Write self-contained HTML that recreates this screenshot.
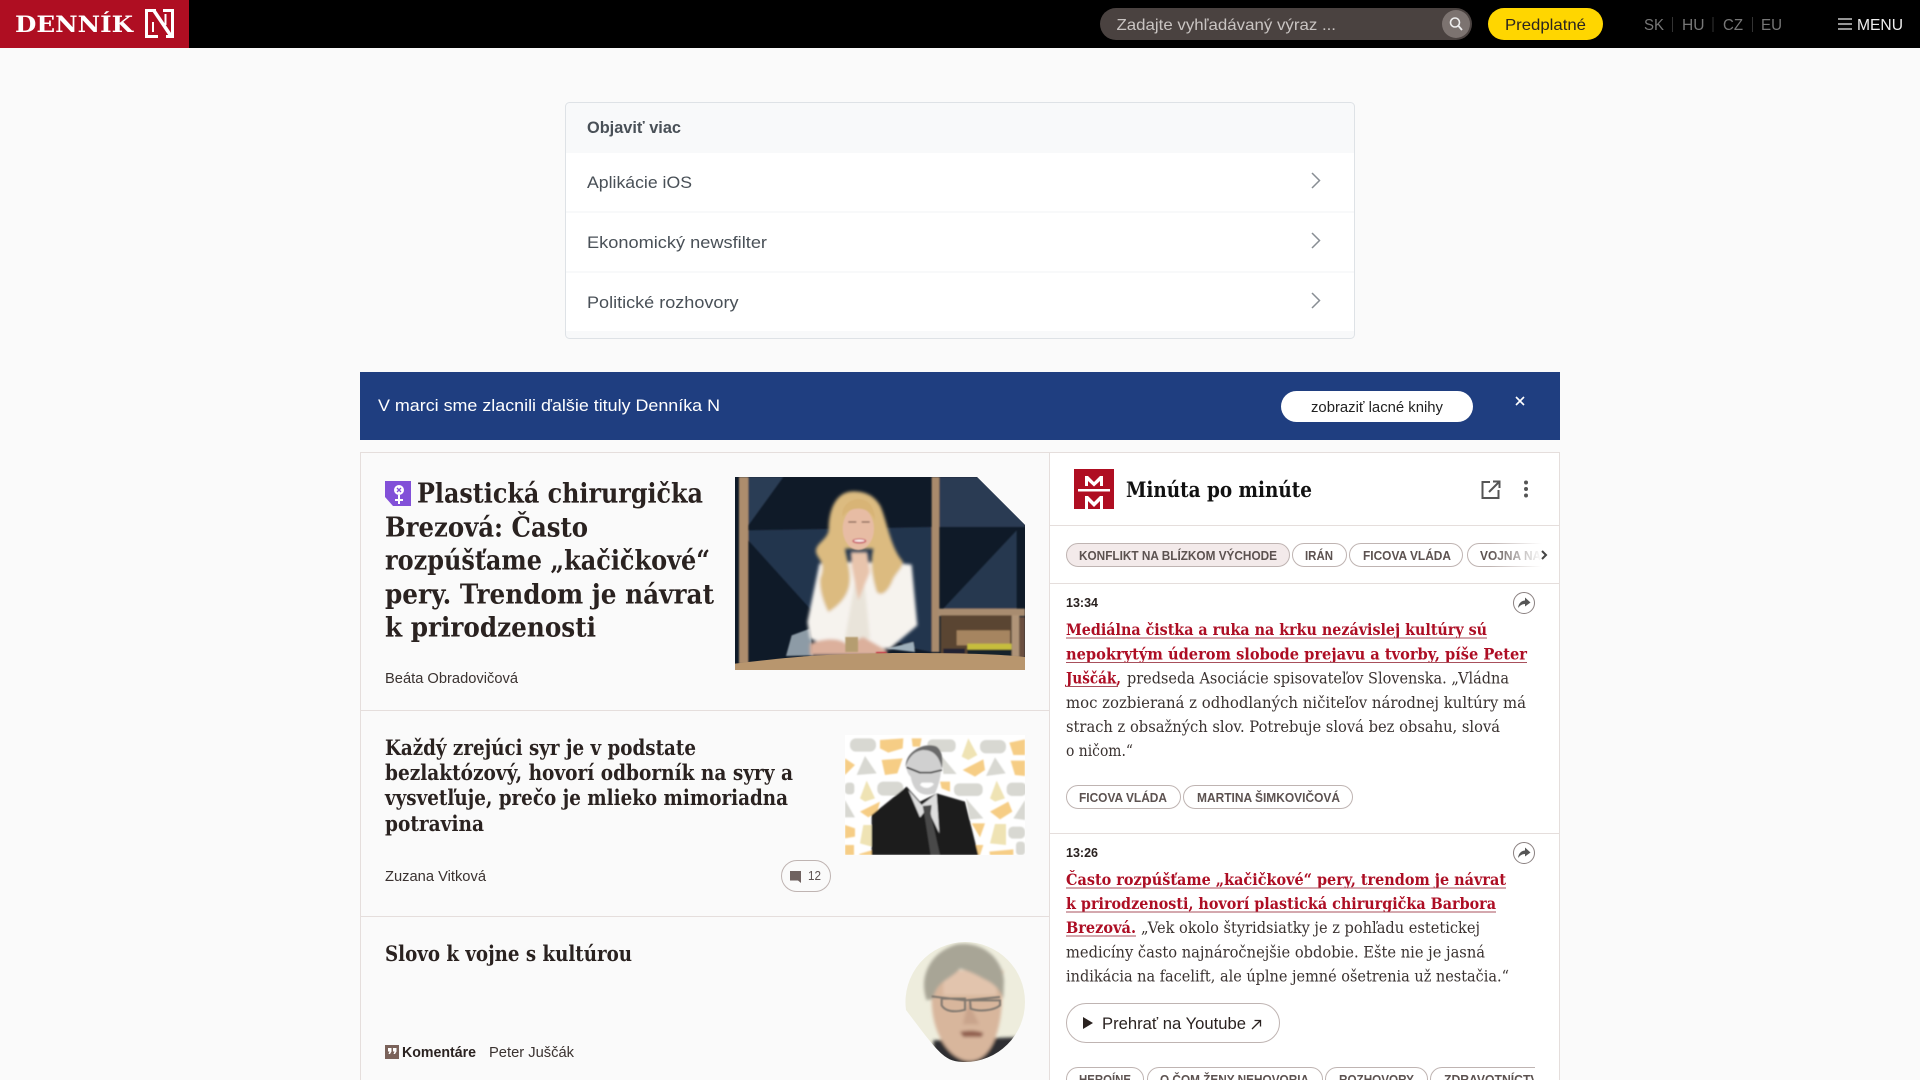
<!DOCTYPE html>
<html lang="sk"><head><meta charset="utf-8"><title>Denník N</title>
<style>
html,body{margin:0;padding:0;width:1920px;height:1080px;overflow:hidden;background:#fafafa}
svg{display:block}
text{white-space:pre}
.s{font-family:"Liberation Sans",sans-serif}
.d{font-family:"DejaVu Serif","Liberation Serif",serif}
.b{font-weight:700}
.h1{font-size:27px;fill:#2a2220;font-weight:700}
.h2{font-size:21.5px;fill:#2a2220;font-weight:700}
.r{font-size:15.5px;fill:#ad0e24;font-weight:700}
.t{font-size:15.5px;fill:#3a3230}
.tag{font-size:12.5px;font-weight:700;fill:#5c5250}
.au{font-size:14.5px;fill:#3a3230}
.lst{font-size:17px;fill:#495057}
.pill{fill:none;stroke:#bfb4b2;stroke-width:1}
.ul{stroke:#a8505c;stroke-width:1}
</style></head>
<body>
<svg xmlns="http://www.w3.org/2000/svg" width="1920" height="1080" viewBox="0 0 1920 1080">
<defs>
<filter id="bl"><feGaussianBlur stdDeviation="5"/></filter>
<filter id="bl2"><feGaussianBlur stdDeviation="2.5"/></filter>
<filter id="bl3"><feGaussianBlur stdDeviation="8"/></filter>
<clipPath id="c1"><path d="M735 477H977L1025 525V670H735Z"/></clipPath>
<clipPath id="c2"><rect x="845" y="735" width="180" height="120"/></clipPath>
<clipPath id="c3"><path d="M965 942A60 60 0 0 1 965 1062C945 1062 940 1055 906 1010A60 60 0 0 1 965 942Z"/></clipPath>
<clipPath id="c4"><rect x="1060" y="1060" width="475" height="20"/></clipPath>
<linearGradient id="fd" x1="0" x2="1"><stop offset="0" stop-color="#fff" stop-opacity="0"/><stop offset=".75" stop-color="#fff"/><stop offset="1" stop-color="#fff"/></linearGradient>
</defs>

<rect width="1920" height="1080" fill="#fafafa"/>

<!-- header -->
<rect width="1920" height="48" fill="#000"/>
<rect width="189" height="48" fill="#af0e22"/>
<text class="d b" x="15" y="32" font-size="22" fill="#fff" textLength="118" lengthAdjust="spacingAndGlyphs">DENNÍK</text>
<path d="M156 10.5H146.5V36.5H158M163 10.500H172.500V36.500H166" fill="none" stroke="#fff" stroke-width="3"/>
<path d="M153.500 10L171 36" fill="none" stroke="#fff" stroke-width="3.500"/>
<path d="M153 22V32M165.500 14V25" fill="none" stroke="#fff" stroke-width="2"/>
<rect x="1100" y="8" width="372" height="32" rx="16" fill="#4a4240"/>
<circle cx="1456" cy="24" r="14" fill="#7c7370"/>
<circle cx="1455" cy="22.5" r="4.5" fill="none" stroke="#eee" stroke-width="1.6"/><path d="M1458.5 26L1462 30" stroke="#eee" stroke-width="1.8"/>
<text class="s" x="1116.5" y="30" font-size="16" fill="#c9c4c2" textLength="219.5" lengthAdjust="spacingAndGlyphs">Zadajte vyhľadávaný výraz ...</text>
<rect x="1488" y="8" width="115" height="32" rx="16" fill="#ffd600"/>
<text class="s" x="1505" y="30" font-size="16" fill="#2a2420" textLength="81" lengthAdjust="spacingAndGlyphs">Predplatné</text>
<g class="s" font-size="16" fill="#777">
<text x="1644" y="30" textLength="20" lengthAdjust="spacingAndGlyphs">SK</text>
<text x="1682" y="30" textLength="22.5" lengthAdjust="spacingAndGlyphs">HU</text>
<text x="1723" y="30" textLength="20" lengthAdjust="spacingAndGlyphs">CZ</text>
<text x="1761" y="30" textLength="21" lengthAdjust="spacingAndGlyphs">EU</text>
</g>
<path d="M1672.5 17V32M1713 17V32M1752.5 17V32" stroke="#333"/>
<path d="M1838 19H1852M1838 24H1852M1838 29H1852" stroke="#eee" stroke-width="1.3"/>
<text class="s" x="1857" y="30" font-size="16" fill="#eee" textLength="46" lengthAdjust="spacingAndGlyphs">MENU</text>

<!-- Objavit viac -->
<rect x="565.5" y="102.5" width="789" height="236" rx="4" fill="#f8f9fa" stroke="#dee2e6"/>
<rect x="566" y="153" width="788" height="58" fill="#fff"/>
<rect x="566" y="213" width="788" height="58" fill="#fff"/>
<rect x="566" y="273" width="788" height="58" fill="#fff"/>
<text class="s b" x="587" y="133" font-size="17" fill="#495057" textLength="94" lengthAdjust="spacingAndGlyphs">Objaviť viac</text>
<text class="s lst" x="587" y="188" textLength="105" lengthAdjust="spacingAndGlyphs">Aplikácie iOS</text>
<text class="s lst" x="587" y="248" textLength="180" lengthAdjust="spacingAndGlyphs">Ekonomický newsfilter</text>
<text class="s lst" x="587" y="308" textLength="151.5" lengthAdjust="spacingAndGlyphs">Politické rozhovory</text>
<path d="M1312 173L1319.500 180.5L1312 188M1312 233L1319.500 240.5L1312 248M1312 293L1319.500 300.5L1312 308" fill="none" stroke="#888e94" stroke-width="1.5"/>

<!-- banner -->
<rect x="360" y="372" width="1200" height="68" fill="#1f3e80"/>
<text class="s" x="378" y="411" font-size="17" fill="#fff" textLength="342" lengthAdjust="spacingAndGlyphs">V marci sme zlacnili ďalšie tituly Denníka N</text>
<rect x="1281" y="391" width="192" height="31" rx="15.5" fill="#fff"/>
<text class="s" x="1311" y="412" font-size="14.5" fill="#222" textLength="132" lengthAdjust="spacingAndGlyphs">zobraziť lacné knihy</text>
<path d="M1516 397L1524 405M1524 397L1516 405" stroke="#fff" stroke-width="1.6"/>

<!-- panels -->
<rect x="1050" y="453" width="509" height="627" fill="#fff"/>
<path d="M360.5 1080V452.5H1559.5V1080M1049.5 453V1080M360 710.500H1050M360 916.500H1050M1050 525.5H1559M1050 583.5H1559M1050 833.5H1559" fill="none" stroke="#e5dedc"/>

<!-- lead image -->
<g clip-path="url(#c1)"><g transform="translate(730 472) scale(.33333)">
<rect x="0" y="0" width="900" height="620" fill="#0f1a28"/>
<g filter="url(#bl2)">
<path d="M42 15H160L48 170Z" fill="#2a3c54"/>
<path d="M50 175L605 165V540L555 530L240 410L55 205Z" fill="#24364d"/>
<path d="M628 15H885V165H628Z" fill="#2a3b52"/>
<path d="M860 175V415H635Z" fill="#26384f"/>
<rect x="27" y="15" width="28" height="560" fill="#ad8d6d"/>
<rect x="605" y="15" width="23" height="525" fill="#a98a6c"/>
<rect x="622" y="410" width="263" height="22" fill="#a88c70"/>
<rect x="632" y="430" width="213" height="120" fill="#5a4433"/>
<rect x="680" y="475" width="160" height="45" fill="#a68560"/>
<rect x="845" y="430" width="23" height="125" fill="#b09478"/>
<rect x="868" y="435" width="17" height="120" fill="#6a5040"/>
<rect x="712" y="515" width="133" height="18" fill="#c6bd3c"/>
<rect x="712" y="533" width="133" height="20" fill="#15222a"/>
<rect x="640" y="530" width="65" height="15" fill="#223"/>
<path d="M168 552L185 490L240 470L250 550Z" fill="#8d9ba6"/>
<path d="M470 530L555 540L550 510Z" fill="#9fb0bb"/>
</g>
<g filter="url(#bl)">
<path d="M268 275L232 450L240 500L300 525L480 530L562 460L545 278L490 272L350 270Z" fill="#f6f3ee"/>
<path d="M345 500L380 300L400 300L420 500Z" fill="#e9e4da"/>
<path d="M370 58C320 58 295 110 296 175C290 205 255 215 258 240C262 262 290 270 270 320C268 360 285 400 295 420C320 405 350 380 358 340C365 300 352 270 345 230L430 230C420 270 425 310 440 360C455 375 475 360 490 320C505 295 520 285 518 268C480 225 470 140 450 100C432 70 405 58 370 58Z" fill="#dcbb80"/>
<path d="M362 240L412 240L420 300L385 385L365 285Z" fill="#e8c4ac"/>
<path d="M240 515C290 495 330 500 350 515L400 495L470 535V550H240Z" fill="#dcb09c"/>
</g>
<g filter="url(#bl2)">
<ellipse cx="385" cy="170" rx="47" ry="64" fill="#e7bca4"/>
<path d="M338 135C352 105 415 95 436 145C432 90 405 78 375 82C350 88 332 110 338 135Z" fill="#d8b476"/>
<rect x="346" y="495" width="38" height="45" fill="#b59d70"/>
<rect x="438" y="540" width="32" height="8" fill="#c23040"/>
<path d="M355 150h24M395 150h24" stroke="#7a5a4e" stroke-width="4"/>
<ellipse cx="388" cy="207" rx="21" ry="8" fill="#c8606a"/><ellipse cx="388" cy="206" rx="16" ry="3.500" fill="#fbf0ee"/>
</g>
<path d="M15 575C200 552 300 545 500 543C700 542 830 548 885 555V620H15Z" fill="#b8966e"/>
</g></g>

<!-- purple icon -->
<path d="M385 481H411V506H393L385 497Z" fill="#8250d8"/>
<circle cx="399" cy="490" r="5" fill="#fff"/><path d="M399 495V504M395 500H403" stroke="#fff" stroke-width="2"/><path d="M397 488L401 492M401 488L397 492" stroke="#8250d8" stroke-width="1.3"/>

<!-- lead headline -->
<g class="d">
<text class="h1" x="417" y="502.500" textLength="286" lengthAdjust="spacingAndGlyphs">Plastická chirurgička</text>
<text class="h1" x="385" y="536.500" textLength="203" lengthAdjust="spacingAndGlyphs">Brezová: Často</text>
<text class="h1" x="385" y="569.500" textLength="325" lengthAdjust="spacingAndGlyphs">rozpúšťame „kačičkové“</text>
<text class="h1" x="385" y="603.500" textLength="329" lengthAdjust="spacingAndGlyphs">pery. Trendom je návrat</text>
<text class="h1" x="385" y="636.500" textLength="211" lengthAdjust="spacingAndGlyphs">k prirodzenosti</text>
</g>
<text class="s au" x="385" y="683" textLength="133" lengthAdjust="spacingAndGlyphs">Beáta Obradovičová</text>

<!-- second -->
<g class="d">
<text class="h2" x="385" y="755" textLength="311" lengthAdjust="spacingAndGlyphs">Každý zrejúci syr je v podstate</text>
<text class="h2" x="385" y="780" textLength="408" lengthAdjust="spacingAndGlyphs">bezlaktózový, hovorí odborník na syry a</text>
<text class="h2" x="385" y="805" textLength="403" lengthAdjust="spacingAndGlyphs">vysvetľuje, prečo je mlieko mimoriadna</text>
<text class="h2" x="385" y="831" textLength="99" lengthAdjust="spacingAndGlyphs">potravina</text>
</g>
<text class="s au" x="385" y="881" textLength="101" lengthAdjust="spacingAndGlyphs">Zuzana Vitková</text>
<rect x="781.5" y="860.5" width="49" height="31" rx="15.5" class="pill"/>
<path d="M790 871H801V883L798 880.5H790Z" fill="#6f6260"/>
<text class="s" x="808" y="880" font-size="13" fill="#5c5250" textLength="13" lengthAdjust="spacingAndGlyphs">12</text>

<!-- cheese image -->
<g clip-path="url(#c2)"><g transform="translate(840 730) scale(.33333)">
<rect x="15" y="15" width="540" height="360" fill="#fff"/>
<g filter="url(#bl2)">
<g fill="#d8d8d2">
<rect x="30" y="25" width="78" height="40" rx="18"/><rect x="262" y="28" width="85" height="38" rx="16"/><rect x="420" y="30" width="78" height="40" rx="18"/>
<path d="M50 135L75 78L110 130Z"/><path d="M305 78L350 132H310Z"/><path d="M438 138L465 82L497 130Z"/>
<rect x="112" y="155" width="78" height="42" rx="18"/><rect x="342" y="160" width="86" height="38" rx="16"/><rect x="500" y="158" width="60" height="40" rx="16"/>
<rect x="15" y="158" width="28" height="35" rx="10"/><path d="M378 205L430 265L390 268Z"/><path d="M520 265L555 210V270Z"/><path d="M15 210L45 262H15Z"/>
<rect x="505" y="290" width="50" height="36" rx="14"/><rect x="528" y="335" width="27" height="40" rx="10"/>
</g>
<g fill="#f6cd85">
<path d="M120 30L190 25L188 55L145 68L120 55Z"/><path d="M215 25H245L240 50H218Z"/><path d="M508 38L555 28V75H520Z"/>
<path d="M15 85L45 105L15 135Z"/><path d="M125 90L188 85L172 130L135 135Z"/><path d="M512 92H555V138L525 135Z"/>
<path d="M368 120L430 88L435 120L405 140Z"/><path d="M300 155L330 155V185L305 175Z"/><path d="M60 245L120 215L112 245L85 262Z"/>
<path d="M450 245L505 215L517 245L480 268Z"/><path d="M15 285L45 295V320L15 325Z"/><path d="M395 280H435L420 322Z"/>
<path d="M15 345H42V375H15Z"/><path d="M58 372L98 360V375H58Z"/><path d="M405 345H430L420 375H410Z"/><path d="M448 365L520 358V375H450Z"/>
</g>
<g fill="#efe3b4">
<path d="M365 80L385 25L412 75L385 90Z"/><path d="M60 205L80 152L105 205L75 215Z"/><path d="M450 205L470 152L495 205L465 215Z"/><path d="M60 340L70 285H95V350Z"/><path d="M450 340L465 282H498V345Z"/>
</g>
<path d="M95 255L200 170L240 215L290 190L375 215L415 375H95Z" fill="#1c1c1c"/>
<path d="M205 180L245 225L290 190L298 310L262 235L240 262Z" fill="#ddd"/>
<path d="M248 228L275 225L272 250L300 375H272L255 265Z" fill="#484848"/>
<path d="M212 140C222 195 255 200 285 190C300 160 308 110 303 90C285 45 215 45 200 95C195 115 205 135 212 140Z" fill="#d0d0d0"/>
<path d="M197 112C195 60 260 35 290 50C310 65 308 95 306 118C300 85 285 60 250 60C225 62 205 80 197 112Z" fill="#6a6a6a"/>
<path d="M200 112L240 128H272L306 120" fill="none" stroke="#2a2a2a" stroke-width="5"/>
<path d="M240 165C255 178 270 176 282 162L275 158H245Z" fill="#fff"/>
</g>
</g></g>

<!-- third -->
<g class="d"><text class="h2" x="385" y="961" textLength="247" lengthAdjust="spacingAndGlyphs">Slovo k vojne s kultúrou</text></g>
<rect x="385" y="1045" width="14" height="14" fill="#7a625a"/>
<path d="M388 1048H391.5V1051.5L390 1054H388.5L389.5 1051.5H388ZM393 1048H396.5V1051.5L395 1054H393.5L394.5 1051.5H393Z" fill="#fff"/>
<text class="s b" x="402" y="1057" font-size="14.5" fill="#2a2220" textLength="74" lengthAdjust="spacingAndGlyphs">Komentáre</text>
<text class="s au" x="489" y="1057" textLength="85" lengthAdjust="spacingAndGlyphs">Peter Juščák</text>

<g clip-path="url(#c3)"><g transform="translate(900 937) scale(.33333)">
<rect width="390" height="390" fill="#eeeddd"/>
<g filter="url(#bl)">
<path d="M100 310L370 300V390H100Z" fill="#2f2f30"/>
<path d="M95 190C95 290 150 372 210 372C268 372 302 295 306 190L310 100L100 100Z" fill="#d8b69c"/>
<path d="M130 110C170 90 250 100 290 140L290 175H130Z" fill="#e2c4ad"/>
<path d="M80 190C55 120 90 45 170 22C245 12 305 60 312 130L310 185C300 160 285 140 250 125C225 110 200 100 180 95C150 130 110 130 100 185Z" fill="#a8a596"/>
<path d="M180 285C200 278 235 280 250 288L245 300H190Z" fill="#92604f"/>
<path d="M205 195L188 262H238Z" fill="#c9a48c"/>
</g>
<g filter="url(#bl2)"><path d="M95 178L195 190L300 180M125 185H195V218C160 228 135 222 125 205ZM210 190H300V205C280 222 235 224 212 215Z" fill="none" stroke="#7f776e" stroke-width="6"/></g>
</g></g>

<!-- right panel head -->
<rect x="1074" y="469" width="40" height="40" fill="#af0e22"/>
<path d="M1085 486V476H1088L1094 482L1100 476H1103V486H1100V481L1094 486.5L1088 481V486Z" fill="#fff"/>
<rect x="1078" y="489" width="32" height="2.5" fill="#fff"/>
<path d="M1085 509V496H1088L1094 502L1100 496H1103V509H1100V501L1094 507L1088 501V509Z" fill="#fff"/>
<text class="d b" x="1126" y="497" font-size="21.5" fill="#111" textLength="186" lengthAdjust="spacingAndGlyphs">Minúta po minúte</text>
<path d="M1490 482H1482.500V498H1498.500V490M1489 492L1499 482M1493 481.5H1499.5V488" fill="none" stroke="#555" stroke-width="2"/>
<circle cx="1526" cy="482.5" r="2" fill="#555"/><circle cx="1526" cy="489" r="2" fill="#555"/><circle cx="1526" cy="495.5" r="2" fill="#555"/>

<!-- tags row -->
<rect x="1066.5" y="543.5" width="223" height="23" rx="11.5" fill="#f3eaea" stroke="#bfb4b2"/>
<rect x="1292.5" y="543.5" width="54" height="23" rx="11.5" class="pill"/>
<rect x="1349.5" y="543.5" width="113" height="23" rx="11.5" class="pill"/>
<rect x="1467.5" y="543.5" width="140" height="23" rx="11.5" class="pill"/>
<g class="s">
<text class="tag" x="1079" y="560" textLength="198" lengthAdjust="spacingAndGlyphs">KONFLIKT NA BLÍZKOM VÝCHODE</text>
<text class="tag" x="1305" y="560" textLength="28" lengthAdjust="spacingAndGlyphs">IRÁN</text>
<text class="tag" x="1363" y="560" textLength="88" lengthAdjust="spacingAndGlyphs">FICOVA VLÁDA</text>
<text class="tag" x="1480" y="560" textLength="125" lengthAdjust="spacingAndGlyphs">VOJNA NA UKRAJINE</text>
</g>
<rect x="1490" y="540" width="69" height="30" fill="url(#fd)"/>
<rect x="1559" y="540" width="100" height="30" fill="#fafafa"/>
<path d="M1559.5 540V570" stroke="#e5dedc"/>
<path d="M1542 551L1546 555L1542 559" fill="none" stroke="#444" stroke-width="2"/>

<!-- entry 1 -->
<text class="s" x="1066" y="607" font-size="13" fill="#2a2220" font-weight="700" textLength="32" lengthAdjust="spacingAndGlyphs">13:34</text>
<circle cx="1524" cy="603" r="10.5" fill="#fff" stroke="#8a8080"/>
<path d="M1518 608C1518.500 603 1522 600.500 1525 600.500V597.500L1530.500 602.500L1525 606.500V604C1522 604 1520 605.500 1518 608Z" fill="#555"/>
<g class="d">
<text class="r" x="1066" y="635" textLength="421" lengthAdjust="spacingAndGlyphs">Mediálna čistka a ruka na krku nezávislej kultúry sú</text>
<text class="r" x="1066" y="659.500" textLength="461" lengthAdjust="spacingAndGlyphs">nepokrytým úderom slobode prejavu a tvorby, píše Peter</text>
<text class="r" x="1066" y="683.500" textLength="55" lengthAdjust="spacingAndGlyphs">Juščák,</text>
<text class="t" x="1127" y="683.500" textLength="382" lengthAdjust="spacingAndGlyphs">predseda Asociácie spisovateľov Slovenska. „Vládna</text>
<text class="t" x="1066" y="708" textLength="460" lengthAdjust="spacingAndGlyphs">moc zozbieraná z odhodlaných ničiteľov národnej kultúry má</text>
<text class="t" x="1066" y="732" textLength="434" lengthAdjust="spacingAndGlyphs">strach z obsažných slov. Potrebuje slová bez obsahu, slová</text>
<text class="t" x="1066" y="756" textLength="67" lengthAdjust="spacingAndGlyphs">o ničom.“</text>
</g>
<path class="ul" d="M1066 638H1487M1066 662.500H1527M1066 686.500H1118"/>
<rect x="1066.5" y="785.500" width="114" height="23" rx="11.500" class="pill"/>
<rect x="1183.500" y="785.500" width="169" height="23" rx="11.500" class="pill"/>
<g class="s">
<text class="tag" x="1079" y="802" textLength="88" lengthAdjust="spacingAndGlyphs">FICOVA VLÁDA</text>
<text class="tag" x="1197" y="802" textLength="143" lengthAdjust="spacingAndGlyphs">MARTINA ŠIMKOVIČOVÁ</text>
</g>

<!-- entry 2 -->
<text class="s" x="1066" y="857" font-size="13" fill="#2a2220" font-weight="700" textLength="32" lengthAdjust="spacingAndGlyphs">13:26</text>
<circle cx="1524" cy="853" r="10.500" fill="#fff" stroke="#8a8080"/>
<path d="M1518 858C1518.500 853 1522 850.500 1525 850.500V847.500L1530.500 852.500L1525 856.500V854C1522 854 1520 855.500 1518 858Z" fill="#555"/>
<g class="d">
<text class="r" x="1066" y="885" textLength="440" lengthAdjust="spacingAndGlyphs">Často rozpúšťame „kačičkové“ pery, trendom je návrat</text>
<text class="r" x="1066" y="909" textLength="430" lengthAdjust="spacingAndGlyphs">k prirodzenosti, hovorí plastická chirurgička Barbora</text>
<text class="r" x="1066" y="933" textLength="70" lengthAdjust="spacingAndGlyphs">Brezová.</text>
<text class="t" x="1141" y="933" textLength="339" lengthAdjust="spacingAndGlyphs">„Vek okolo štyridsiatky je z pohľadu estetickej</text>
<text class="t" x="1066" y="957.500" textLength="419" lengthAdjust="spacingAndGlyphs">medicíny často najnáročnejšie obdobie. Ešte nie je jasná</text>
<text class="t" x="1066" y="981.500" textLength="443" lengthAdjust="spacingAndGlyphs">indikácia na facelift, ale úplne jemné ošetrenia už nestačia.“</text>
</g>
<path class="ul" d="M1066 888H1506M1066 912H1496M1066 936H1136"/>
<rect x="1066.500" y="1003.500" width="213" height="39" rx="19.500" class="pill"/>
<path d="M1083 1017L1093 1023L1083 1029Z" fill="#2a2220"/>
<text class="s" x="1102" y="1029" font-size="17" fill="#2a2220" textLength="144" lengthAdjust="spacingAndGlyphs">Prehrať na Youtube</text>
<path d="M1252 1029L1260 1021M1254.500 1020.500H1260.500V1026.500" fill="none" stroke="#2a2220" stroke-width="1.300"/>
<g clip-path="url(#c4)">
<rect x="1066.500" y="1067.500" width="77" height="23" rx="11.500" class="pill"/>
<rect x="1147.500" y="1067.500" width="175" height="23" rx="11.500" class="pill"/>
<rect x="1325.500" y="1067.500" width="102" height="23" rx="11.500" class="pill"/>
<rect x="1430.500" y="1067.500" width="140" height="23" rx="11.500" class="pill"/>
<g class="s">
<text class="tag" x="1079" y="1084" textLength="52" lengthAdjust="spacingAndGlyphs">HEROÍNE</text>
<text class="tag" x="1160" y="1084" textLength="149" lengthAdjust="spacingAndGlyphs">O ČOM ŽENY NEHOVORIA</text>
<text class="tag" x="1339" y="1084" textLength="75" lengthAdjust="spacingAndGlyphs">ROZHOVORY</text>
<text class="tag" x="1444" y="1084" textLength="104" lengthAdjust="spacingAndGlyphs">ZDRAVOTNÍCTVO</text>
</g>
</g>
</svg>
</body></html>
